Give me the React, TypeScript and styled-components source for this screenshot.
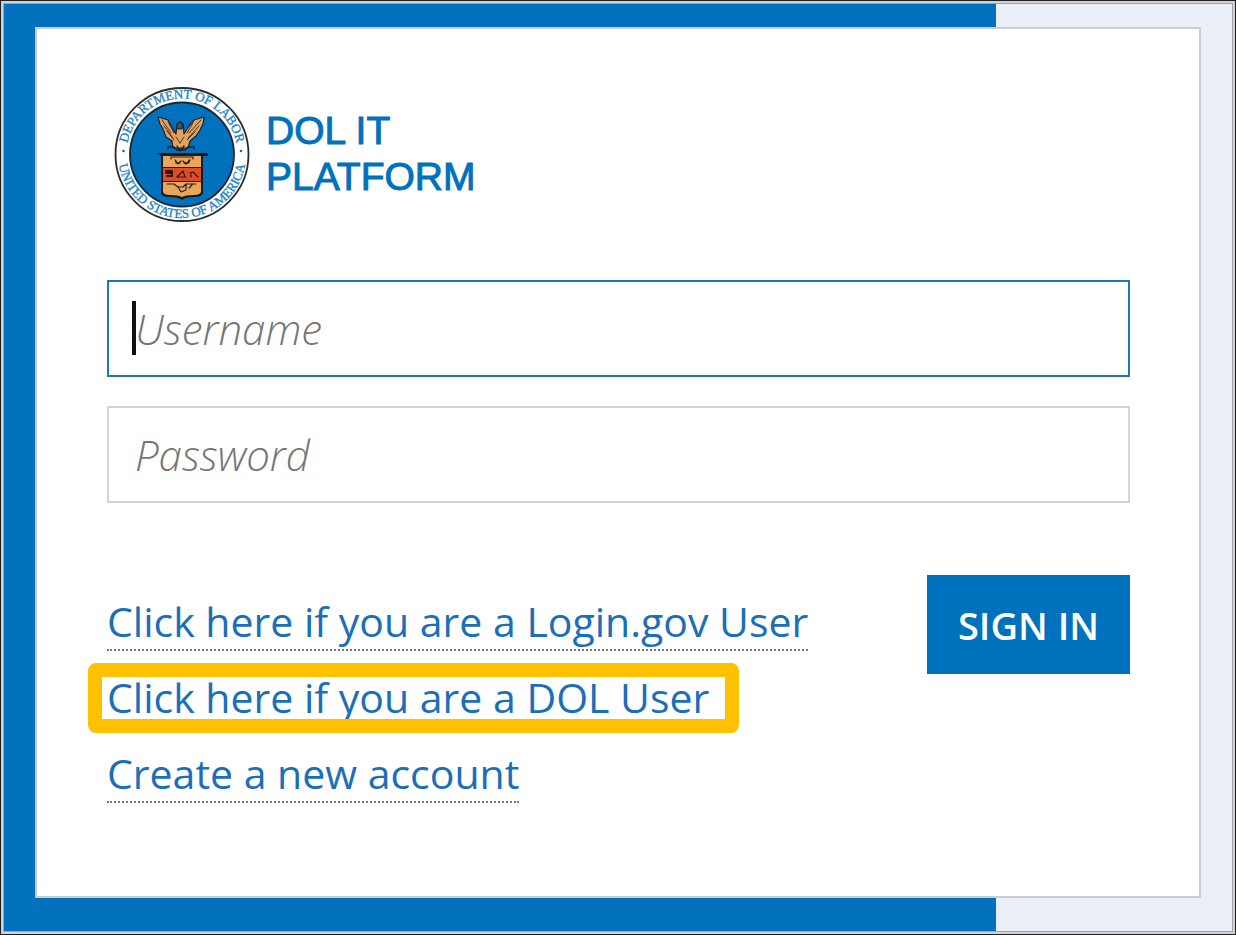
import React from "react";
import styled, { createGlobalStyle } from "styled-components";

const blue = "#0071bc";
const linkBlue = "#1a6fb8";

const GlobalStyle = createGlobalStyle`
  *, *::before, *::after { box-sizing: border-box; }
  body { margin: 0; font-family: "Open Sans", sans-serif; }
`;

const Frame = styled.div`
  display: flex;
  min-height: 100vh;
  padding: 1px;
  background: #231f20;
`;

const Bezel = styled.div`
  display: flex;
  flex: 1;
  border: 2px solid #d2d2d6;
`;

const Page = styled.main`
  flex: 1;
  padding: 23px 31px 33px;
  border: 1px solid #a3a5ab;
  background: linear-gradient(to right, ${blue} 80.8%, #eaeff7 80.8%);
`;

const Card = styled.section`
  min-height: 871px;
  padding: 57px 69px 92px 70px;
  border: 2px solid #cbcdd0;
  background: #fff;
`;

const Brand = styled.header`
  display: flex;
  align-items: center;
  gap: 16px;
  padding-left: 7px;
`;

const BrandName = styled.h1`
  margin: 0;
  font: 400 39px/46px "Liberation Sans", Arial, sans-serif;
  color: ${blue};
  -webkit-text-stroke: 1px ${blue};
`;

const Seal = styled.svg`
  flex: none;
  display: block;
  width: 136px;
  height: 136px;
`;

const Form = styled.form`
  display: flex;
  flex-direction: column;
  gap: 29px;
  margin-top: 58px;
`;

const Field = styled.div`
  position: relative;
`;

const Input = styled.input<{ $active?: boolean }>`
  display: block;
  width: 100%;
  height: 97px;
  padding: 0 26px;
  border: 2px solid ${(p) => (p.$active ? "#1e78b8" : "#d3d3d3")};
  border-radius: 0;
  outline: none;
  background: #fff;
  font: 400 42px "Open Sans", sans-serif;
  color: #333;

  &::placeholder {
    color: #757575;
    opacity: 1;
    font-style: italic;
    font-weight: 300;
  }
`;

const Caret = styled.span`
  position: absolute;
  top: 21px;
  left: 25px;
  width: 4px;
  height: 54px;
  background: #111;
`;

const Actions = styled.div`
  display: flex;
  align-items: flex-start;
  justify-content: space-between;
  margin-top: 43px;
`;

const Links = styled.nav`
  display: flex;
  flex-direction: column;
  align-items: flex-start;
  gap: 19px;
  padding-top: 19px;
`;

const TextLink = styled.a`
  position: relative;
  border-bottom: 2px dotted #777;
  font-size: 41px;
  line-height: 55px;
  color: ${linkBlue};
  text-decoration: none;
`;

const Highlight = styled.span`
  position: absolute;
  inset: -7px -30px -8px -19px;
  border: 14px solid #ffc000;
  border-radius: 8px;
  pointer-events: none;
`;

const SignIn = styled.button`
  height: 99px;
  padding: 0 31px;
  border: 0;
  background: ${blue};
  font: 600 38px "Open Sans", sans-serif;
  color: #fff;
`;

function DepartmentSeal() {
  return (
    <Seal viewBox="0 0 136 136" role="img" aria-label="Department of Labor seal">
      <defs>
        <path id="seal-top" d="M12.500 68 A55.500 55.500 0 0 1 123.500 68" />
        <path id="seal-bottom" d="M4 68 A64 64 0 0 0 132 68" />
      </defs>
      <circle cx="68" cy="68.500" r="66.500" fill="#fff" stroke="#2b2b2b" strokeWidth="1.800" />
      <circle cx="68" cy="68.500" r="52" fill={blue} stroke="#1b2730" strokeWidth="1.800" />
      <g fill="#1581c5" stroke="#1581c5" strokeWidth="0.300" fontFamily="Liberation Serif, serif" fontSize="13" textAnchor="middle">
        <text><textPath href="#seal-top" startOffset="50%">DEPARTMENT OF LABOR</textPath></text>
        <text><textPath href="#seal-bottom" startOffset="50%">UNITED STATES OF AMERICA</textPath></text>
      </g>
      <circle cx="9.500" cy="65" r="1.300" fill={blue} />
      <circle cx="127" cy="65" r="1.300" fill={blue} />

      <g stroke="#17222b" strokeLinejoin="round" strokeLinecap="round">
        <path
          d="M44 31 L54 34 L59 43 L62 48 L63 38 L66 36 L69 38 L70 48 L75 40 L80 34 L90 31 L89 38 L86 44 L82 50 L76 55 L74 62 H59 L58 55 L52 51 L49 43 L46 38Z"
          fill="#e7a15c"
          strokeWidth="1.200"
        />
        <path
          d="M48 34 L57 47 M50 40 L59 52 M53 45 L60 54 M54 36 L60 47 M87 34 L75 47 M85 40 L74 52 M81 46 L73 54 M79 37 L73 47 M62 51 L66 57 M70 51 L66 57"
          fill="none"
          strokeWidth="0.800"
        />
        <path d="M63 38 L66 36 L69 38 L68 43 L64 43Z" fill="#32566e" strokeWidth="1" />
        <path d="M54 63 V61 H60 L63 64 H71 L74 61 H80 V63 M63 60 L66 65 L70 60" fill="none" strokeWidth="1.400" />
      </g>
      <path d="M43 67 H94 V70 H89 V107 Q88 111 81 111 Q71 111 68 114 Q65 111 55 111 Q48 111 47 107 V70Z" fill="#1a1b1b" />
      <path d="M49 70 H87 V81 H49Z M49 96 H87 V106 Q86 109 80 109 Q71 109 68 111 Q65 109 56 109 Q50 109 49 106Z" fill="#e9a65f" />
      <path d="M49 82 H87 V95 H49Z" fill="#de4b26" />
      <g fill="none" stroke="#281c17" strokeWidth="1.200" strokeLinecap="round" strokeLinejoin="round">
        <path d="M57 73 V71 H79 V73 M61 74 L64 78 L67 75 M69 75 L72 78 L76 74" />
        <path d="M62 75 V77 H66 M70 77 H75 V74" />
        <path d="M52 85 H58 V90 H53 M52 87 H58" strokeWidth="2" />
        <path d="M63 91 L69 85 L71 91 M63 91 H72 M76 87 L79 86 L84 91 M77 88 V91" />
        <path d="M53 98 H60 L64 101 H69 L72 98 H82 M64 101 L67 106 L72 104 M72 98 V103 M78 99 L75 102" />
      </g>
    </Seal>
  );
}

export default function App() {
  return (
    <>
      <GlobalStyle />
      <Frame>
        <Bezel>
          <Page>
            <Card>
              <Brand>
                <DepartmentSeal />
                <BrandName>
                  DOL IT
                  <br />
                  PLATFORM
                </BrandName>
              </Brand>
              <Form onSubmit={(e) => e.preventDefault()}>
                <Field>
                  <Input $active type="text" aria-label="Username" placeholder="Username" />
                  <Caret aria-hidden="true" />
                </Field>
                <Field>
                  <Input type="password" aria-label="Password" placeholder="Password" />
                </Field>
                <Actions>
                  <Links>
                    <TextLink href="#login-gov">Click here if you are a Login.gov User</TextLink>
                    <TextLink href="#dol">
                      Click here if you are a DOL User
                      <Highlight />
                    </TextLink>
                    <TextLink href="#register">Create a new account</TextLink>
                  </Links>
                  <SignIn type="submit">SIGN IN</SignIn>
                </Actions>
              </Form>
            </Card>
          </Page>
        </Bezel>
      </Frame>
    </>
  );
}
